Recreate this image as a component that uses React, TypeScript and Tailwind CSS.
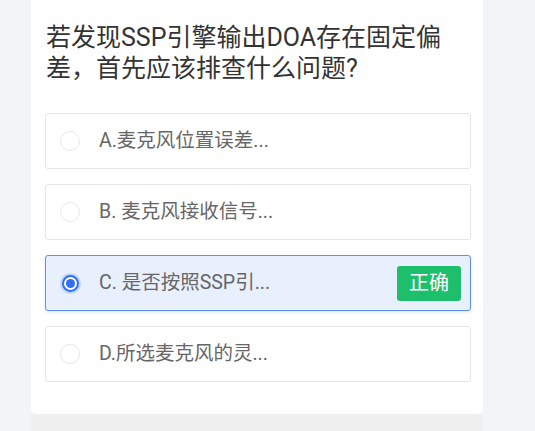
import React from "react";

type Opt = { label: string; selected?: boolean; correct?: boolean };

const options: Opt[] = [
  { label: "A.麦克风位置误差..." },
  { label: "B. 麦克风接收信号..." },
  { label: "C. 是否按照SSP引...", selected: true, correct: true },
  { label: "D.所选麦克风的灵..." },
];

function Radio({ checked }: { checked?: boolean }) {
  return (
    <div className="w-5 h-5 flex items-center justify-center shrink-0">
      {checked ? (
        <div className="w-[17px] h-[17px] rounded-full border-2 border-[#2f6ef5] bg-white flex items-center justify-center shadow-[0_0_0_2px_#c3d6fb]">
          <div className="w-[9px] h-[9px] rounded-full bg-[#2f6ef5]" />
        </div>
      ) : (
        <div className="w-5 h-5 rounded-full border-[1.5px] border-[#e4e8ef] bg-white" />
      )}
    </div>
  );
}

export default function App() {
  return (
    <div
      className="w-[535px] h-[431px] bg-[#f3f4f6] flex pl-[31px]"
      style={{ fontFamily: 'Roboto, "Noto Sans CJK SC", sans-serif' }}
    >
      <div className="w-[452px] flex flex-col">
        <div className="h-[414px] bg-white rounded-b-[5px] pt-[22px] pl-[14px] pr-[12px]">
          <div className="ml-[1px] w-[410px] text-[25px] leading-[31px] text-[#333333]">
            若发现SSP引擎输出DOA存在固定偏差，首先应该排查什么问题?
          </div>
          <div className="mt-[29px] flex flex-col gap-[15px]">
            {options.map((o) => (
              <div
                key={o.label}
                className={
                  o.selected
                    ? "h-[56px] rounded-[3px] border border-[#5d90f2] bg-[#e9f0fd] shadow-[0_1px_3px_rgba(60,100,200,0.18)] flex items-center pl-[14px] pr-[9px]"
                    : "h-[56px] rounded-[3px] border border-[#e1e6ed] bg-white flex items-center pl-[14px] pr-[9px]"
                }
              >
                <Radio checked={o.selected} />
                <div className="ml-[19px] flex-1 text-[19.5px] text-[#666666] leading-none">{o.label}</div>
                {o.correct && (
                  <div className="w-[64px] h-[35px] rounded-[3px] bg-[#1dbf6c] text-white text-[20px] flex items-center justify-center">
                    正确
                  </div>
                )}
              </div>
            ))}
          </div>
        </div>
        <div className="flex-1 bg-[#f0f0f0]" />
      </div>
    </div>
  );
}
